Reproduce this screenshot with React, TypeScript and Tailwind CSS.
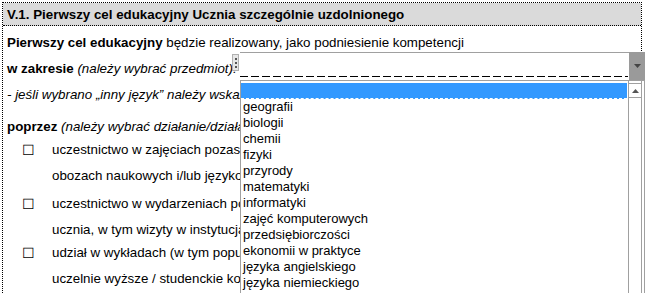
import React from 'react';

const options = [
  'geografii',
  'biologii',
  'chemii',
  'fizyki',
  'przyrody',
  'matematyki',
  'informatyki',
  'zajęć komputerowych',
  'przedsiębiorczości',
  'ekonomii w praktyce',
  'języka angielskiego',
  'języka niemieckiego',
  'języka francuskiego',
];

const CheckRow: React.FC<{ first: string; second: string; className?: string }> = ({ first, second, className }) => (
  <div className={className}>
    <div className="flex h-[26px] items-center">
      <span className="w-[45px] pl-[15px] text-[14px]">☐</span>
      <span>{first}</span>
    </div>
    <div className="flex h-[26px] items-center pl-[45px]">{second}</div>
  </div>
);

export default function App() {
  return (
    <div className="relative h-[293px] w-[648px] overflow-hidden bg-white font-['Liberation_Sans',Arial,sans-serif] text-[13.33px] text-black">
      <div className="ml-[2px] mt-[2px] w-[640px] border border-dotted border-black">
        <div className="h-[23px] border-b border-dotted border-black bg-[#dadada] px-[4px] font-bold leading-[23px]">
          V.1. Pierwszy cel edukacyjny Ucznia szczególnie uzdolnionego
        </div>
        <div className="px-[4px] pt-[4px] pb-[20px]">
          <div className="flex h-[26px] items-center whitespace-nowrap">
            <b>Pierwszy cel edukacyjny</b>&nbsp;będzie realizowany, jako podniesienie kompetencji
          </div>
          <div className="flex h-[26px] items-center whitespace-nowrap">
            <b>w zakresie</b>&nbsp;<i>(należy wybrać przedmiot):</i>
          </div>
          <div className="flex h-[26px] items-center whitespace-nowrap italic">
            - jeśli wybrano „inny język” należy wskazać jaki:
          </div>
          <div className="mt-[6px] flex h-[26px] items-center whitespace-nowrap">
            <b>poprzez</b>&nbsp;<i>(należy wybrać działanie/działania):</i>
          </div>
          <div className="-mt-[3px] flex flex-col whitespace-nowrap">
            <CheckRow
              first="uczestnictwo w zajęciach pozaszkolnych, w tym na kursach,"
              second="obozach naukowych i/lub językowych"
            />
            <CheckRow
              className="mt-[2px]"
              first="uczestnictwo w wydarzeniach pozaszkolnych rozwijających kompetencje"
              second="ucznia, w tym wizyty w instytucjach naukowych"
            />
            <CheckRow
              className="-mt-[3px]"
              first="udział w wykładach (w tym popularnonaukowych) organizowanych przez"
              second="uczelnie wyższe / studenckie koła naukowe"
            />
          </div>
        </div>
      </div>

      {/* grip */}
      <div className="absolute left-[232px] top-[54px] flex h-[17px] w-[7px] flex-col items-center justify-center gap-[2px] border border-[#b0b0b0] bg-[#e6e6e6]">
        <span className="h-[2px] w-[2px] bg-[#555]" />
        <span className="h-[2px] w-[2px] bg-[#555]" />
        <span className="h-[2px] w-[2px] bg-[#555]" />
      </div>

      {/* select */}
      <div className="absolute left-[240px] top-[52px] h-[28px] w-[389px] border-t border-[#a0a0a0] bg-white">
        <div className="absolute bottom-[3px] left-0 h-[1px] w-[388px] bg-[repeating-linear-gradient(90deg,#000_0_8px,transparent_8px_11px)]" />
      </div>
      <div className="absolute left-[629px] top-[52px] flex h-[28px] w-[16px] items-center justify-center bg-[#9a9a9a]">
        <svg width="7" height="4" viewBox="0 0 7 4">
          <path d="M0 0h7L3.5 4z" fill="#444" />
        </svg>
      </div>

      {/* dropdown list */}
      <div className="absolute left-[240px] top-[80px] flex h-[230px] w-[405px] border-l border-r border-t border-[#a0a0a0] bg-white text-[13px]">
        <div className="w-[386px] pt-[2px]">
          <div className="h-[16px] border-b border-dashed border-white bg-[#3399ff]" />
          {options.map((o) => (
            <div key={o} className="h-[16px] whitespace-nowrap pl-[2px] leading-[16px]">
              {o}
            </div>
          ))}
        </div>
        <div className="ml-[1px] w-[14px] border-l border-r border-[#a0a0a0] pt-[2px]">
          <div className="flex h-[15px] items-center justify-center border-b border-t border-[#a0a0a0] bg-white">
            <svg width="7" height="4" viewBox="0 0 7 4">
              <path d="M3.5 0L7 4H0z" fill="#555" />
            </svg>
          </div>
        </div>
      </div>
    </div>
  );
}
